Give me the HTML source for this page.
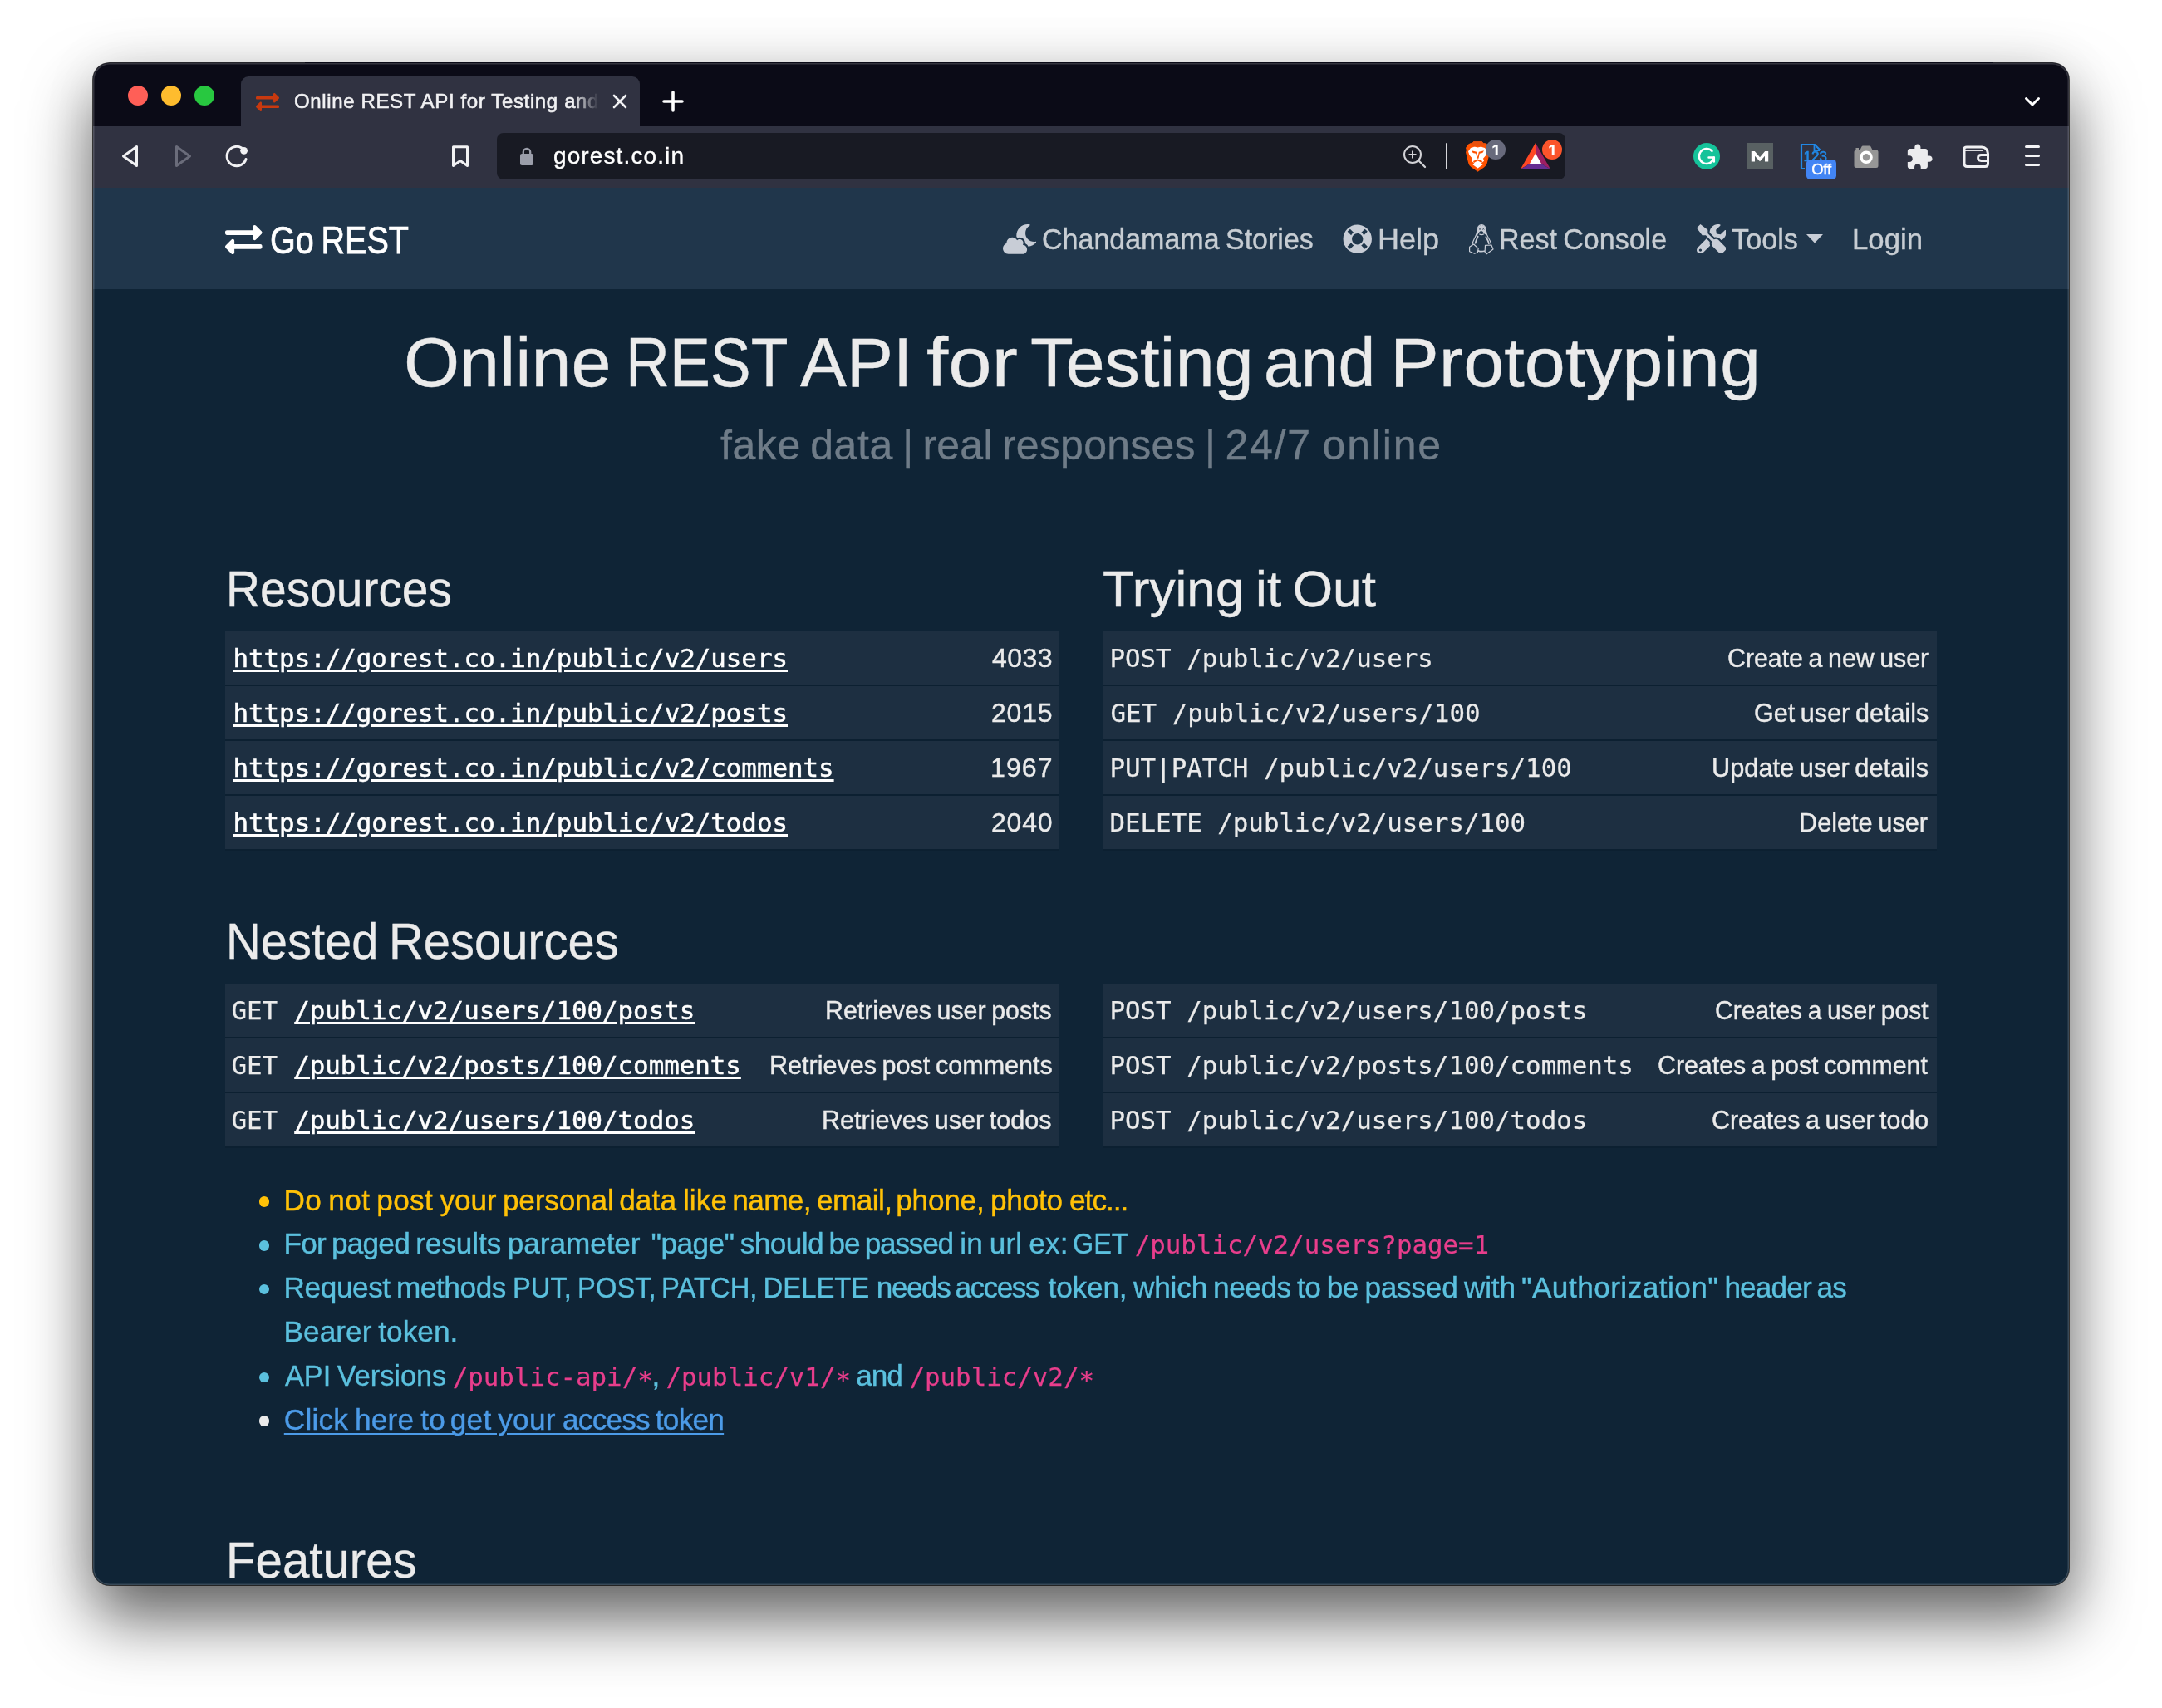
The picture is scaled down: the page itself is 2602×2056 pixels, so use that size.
<!DOCTYPE html>
<html lang="en">
<head>
<meta charset="utf-8">
<title>Online REST API for Testing and Prototyping</title>
<style>
html,body{margin:0;padding:0;}
body{background:#fff;font-family:"Liberation Sans",sans-serif;}
#root{position:relative;width:2602px;height:2056px;overflow:hidden;background:#fff;}
#shadow{position:absolute;left:112px;top:75.5px;width:2378px;height:1832.5px;border-radius:20px;background:#0f2436;
 box-shadow:0 0 0 1px rgba(0,0,0,.7),0 40px 80px rgba(0,0,0,.62),0 0 70px rgba(0,0,0,.07);}
#win{position:absolute;left:0;top:0;width:2602px;height:2056px;will-change:transform;clip-path:inset(75.5px 112px 148px 112px round 20px);}
#win div,#win svg{position:absolute;}
.t{position:absolute;white-space:nowrap;line-height:1;margin:0;padding:0;font-weight:400;font-family:"Liberation Sans",sans-serif;text-decoration:none;-webkit-text-stroke:0.4px currentColor;word-spacing:-0.06em;}
.t.m{-webkit-text-stroke:0.25px currentColor;word-spacing:0;}
.ast{position:relative;top:4.5px;}
.t.ml{-webkit-text-stroke:0.5px currentColor;}
h1.t,h3.t{font-weight:400;}
.w{margin:0;padding:0;font-weight:400;font-size:inherit;}
#tabstrip{left:112px;top:75px;width:2378px;height:77px;background:#0b0b17;}
#toolbar{left:112px;top:151.5px;width:2378px;height:74.5px;background:#303241;}
#tab{left:290px;top:92px;width:480px;height:60px;background:#303241;border-radius:9px 9px 0 0;}
#urlbar{left:598px;top:160px;width:1286px;height:56px;border-radius:8px;background:#181a23;}
#nav{left:112px;top:226px;width:2378px;height:122px;background:#20364b;}
#page{left:112px;top:348px;width:2378px;height:1560px;background:#0f2436;}
.row{background:#1d2f41;height:64px;}
.tl{left:271px;width:1004px;} .tr{left:1327px;width:1004px;}
.bd{background:#0c2031;height:2px;}
.dot{width:12.4px;height:12.4px;border-radius:50%;left:311.8px;}
.tabfade{left:690px;top:100px;width:36px;height:44px;background:linear-gradient(90deg,rgba(48,50,65,0),#303241 85%);}
.badge{border-radius:12px;color:#fff;font-size:15px;line-height:24px;text-align:center;width:24px;height:24px;}
</style>
</head>
<body>
<div id="root">
<div id="shadow"></div>
<div id="win">
<div id="tabstrip"></div>
<div id="toolbar"></div>
<div id="tab"></div>
<div id="urlbar"></div>
<div id="nav"></div>
<div id="page"></div>
<div class="row tl" style="top:760px"></div>
<div class="bd tl" style="top:824px"></div>
<div class="row tl" style="top:826px"></div>
<div class="bd tl" style="top:890px"></div>
<div class="row tl" style="top:892px"></div>
<div class="bd tl" style="top:956px"></div>
<div class="row tl" style="top:958px"></div>
<div class="bd tl" style="top:1022px"></div>
<div class="row tl" style="top:1184px"></div>
<div class="bd tl" style="top:1248px"></div>
<div class="row tl" style="top:1250px"></div>
<div class="bd tl" style="top:1314px"></div>
<div class="row tl" style="top:1316px"></div>
<div class="bd tl" style="top:1380px"></div>
<div class="row tr" style="top:760px"></div>
<div class="bd tr" style="top:824px"></div>
<div class="row tr" style="top:826px"></div>
<div class="bd tr" style="top:890px"></div>
<div class="row tr" style="top:892px"></div>
<div class="bd tr" style="top:956px"></div>
<div class="row tr" style="top:958px"></div>
<div class="bd tr" style="top:1022px"></div>
<div class="row tr" style="top:1184px"></div>
<div class="bd tr" style="top:1248px"></div>
<div class="row tr" style="top:1250px"></div>
<div class="bd tr" style="top:1314px"></div>
<div class="row tr" style="top:1316px"></div>
<div class="bd tr" style="top:1380px"></div>
<div class="dot" style="top:1440.4px;background:#ffc107"></div>
<div class="dot" style="top:1493.2px;background:#5bc0de"></div>
<div class="dot" style="top:1546.0px;background:#5bc0de"></div>
<div class="dot" style="top:1651.6px;background:#5bc0de"></div>
<div class="dot" style="top:1704.4px;background:#ebebeb"></div>
<div style="left:532px;top:1725px;width:14px;height:2px;background:#4c9be8"></div>
<div style="left:666px;top:1725px;width:14px;height:2px;background:#4c9be8"></div>
<span id="t0" class="t tabtitle" style='left:354.0px;top:109.8px;font-size:24px;color:#f1f1f3;letter-spacing:0.638px;-webkit-text-stroke:0.6px #f1f1f3;word-spacing:0;'>Online REST API for Testing and</span>
<span id="t1" class="t" style='left:666.0px;top:174.2px;font-size:28px;color:#ffffff;letter-spacing:1.111px;'>gorest.co.in</span>
<span id="t2" class="t sx" style='left:325.0px;top:265.6px;font-size:46px;color:#ffffff;transform-origin:0 0;transform:scaleX(0.8605);-webkit-text-stroke:0.75px #fff;'>Go REST</span>
<span id="t3" class="t sx" style='left:1254.0px;top:270.6px;font-size:35.6px;color:#c7cdd3;transform-origin:0 0;transform:scaleX(0.9557);'>Chandamama Stories</span>
<span id="t4" class="t sx" style='left:1658.0px;top:270.6px;font-size:35.6px;color:#c7cdd3;transform-origin:0 0;transform:scaleX(1.0126);'>Help</span>
<span id="t5" class="t sx" style='left:1804.4px;top:270.6px;font-size:35.6px;color:#c7cdd3;transform-origin:0 0;transform:scaleX(0.9556);'>Rest Console</span>
<span id="t6" class="t sx" style='left:2084.0px;top:270.6px;font-size:35.6px;color:#c7cdd3;transform-origin:0 0;transform:scaleX(0.9633);'>Tools</span>
<span id="t7" class="t sx" style='left:2229.0px;top:270.6px;font-size:35.6px;color:#c7cdd3;transform-origin:0 0;transform:scaleX(0.9763);'>Login</span>
<h1 class="w"><span id="t8" class="t sx" style='left:486.0px;top:394.4px;font-size:84px;color:#ebebeb;transform-origin:0 0;transform:scaleX(1.0271);'>Online</span>
<span id="t9" class="t sx" style='left:753.4px;top:394.4px;font-size:84px;color:#ebebeb;transform-origin:0 0;transform:scaleX(0.8722);'>REST</span>
<span id="t10" class="t sx" style='left:963.4px;top:394.4px;font-size:84px;color:#ebebeb;transform-origin:0 0;transform:scaleX(0.9984);'>API</span>
<span id="t11" class="t sx" style='left:1114.6px;top:394.4px;font-size:84px;color:#ebebeb;transform-origin:0 0;transform:scaleX(1.1204);'>for</span>
<span id="t12" class="t sx" style='left:1240.0px;top:394.4px;font-size:84px;color:#ebebeb;transform-origin:0 0;transform:scaleX(1.0098);'>Testing</span>
<span id="t13" class="t sx" style='left:1520.6px;top:394.4px;font-size:84px;color:#ebebeb;transform-origin:0 0;transform:scaleX(0.9590);'>and</span>
<span id="t14" class="t sx" style='left:1673.0px;top:394.4px;font-size:84px;color:#ebebeb;transform-origin:0 0;transform:scaleX(1.0494);'>Prototyping</span></h1>
<p class="w"><span id="t15" class="t" style='left:867.0px;top:510.7px;font-size:50px;color:#6f7c88;letter-spacing:0.567px;'>fake data |</span>
<span id="t16" class="t" style='left:1110.4px;top:510.7px;font-size:50px;color:#6f7c88;letter-spacing:0.251px;'>real responses |</span>
<span id="t17" class="t" style='left:1474.4px;top:510.7px;font-size:50px;color:#6f7c88;letter-spacing:1.804px;'>24/7 online</span></p>
<h3 id="t18" class="t sx" style='left:272.4px;top:678.2px;font-size:62px;color:#ebebeb;transform-origin:0 0;transform:scaleX(0.9175);'>Resources</h3>
<h3 id="t19" class="t sx" style='left:1327.0px;top:678.2px;font-size:62px;color:#ebebeb;transform-origin:0 0;transform:scaleX(1.0033);'>Trying it Out</h3>
<h3 id="t20" class="t sx" style='left:272.0px;top:1102.1px;font-size:62px;color:#ebebeb;transform-origin:0 0;transform:scaleX(0.9336);'>Nested Resources</h3>
<h3 id="t21" class="t sx" style='left:272.2px;top:1846.5px;font-size:62px;color:#ebebeb;transform-origin:0 0;transform:scaleX(0.9389);'>Features</h3>
<a id="t22" class="t m ml" style='left:280.5px;top:776.9px;font-size:30.8px;color:#ffffff;font-family:"DejaVu Sans Mono", "Liberation Mono", monospace;text-decoration:underline;text-decoration-thickness:2.6px;text-underline-offset:2.6px;'>https://gorest.co.in/public/v2/users</a>
<span id="t23" class="t" style='left:1194.0px;top:775.9px;font-size:32px;color:#ebebeb;letter-spacing:0.453px;'>4033</span>
<a id="t24" class="t m ml" style='left:280.5px;top:842.9px;font-size:30.8px;color:#ffffff;font-family:"DejaVu Sans Mono", "Liberation Mono", monospace;text-decoration:underline;text-decoration-thickness:2.6px;text-underline-offset:2.6px;'>https://gorest.co.in/public/v2/posts</a>
<span id="t25" class="t" style='left:1193.0px;top:841.9px;font-size:32px;color:#ebebeb;letter-spacing:0.786px;'>2015</span>
<a id="t26" class="t m ml" style='left:280.5px;top:908.9px;font-size:30.8px;color:#ffffff;font-family:"DejaVu Sans Mono", "Liberation Mono", monospace;text-decoration:underline;text-decoration-thickness:2.6px;text-underline-offset:2.6px;'>https://gorest.co.in/public/v2/comments</a>
<span id="t27" class="t" style='left:1192.0px;top:907.9px;font-size:32px;color:#ebebeb;letter-spacing:1.120px;'>1967</span>
<a id="t28" class="t m ml" style='left:280.5px;top:974.9px;font-size:30.8px;color:#ffffff;font-family:"DejaVu Sans Mono", "Liberation Mono", monospace;text-decoration:underline;text-decoration-thickness:2.6px;text-underline-offset:2.6px;'>https://gorest.co.in/public/v2/todos</a>
<span id="t29" class="t" style='left:1193.0px;top:973.9px;font-size:32px;color:#ebebeb;letter-spacing:0.786px;'>2040</span>
<code id="t30" class="t m" style='left:1335.5px;top:776.9px;font-size:30.8px;color:#ebebeb;font-family:"DejaVu Sans Mono", "Liberation Mono", monospace;'>POST /public/v2/users</code>
<span id="t31" class="t sx" style='left:2079.0px;top:775.9px;font-size:32px;color:#ebebeb;transform-origin:0 0;transform:scaleX(0.9472);'>Create a new user</span>
<code id="t32" class="t m" style='left:1336.5px;top:842.9px;font-size:30.8px;color:#ebebeb;font-family:"DejaVu Sans Mono", "Liberation Mono", monospace;'>GET /public/v2/users/100</code>
<span id="t33" class="t sx" style='left:2111.0px;top:841.9px;font-size:32px;color:#ebebeb;transform-origin:0 0;transform:scaleX(0.9543);'>Get user details</span>
<code id="t34" class="t m" style='left:1335.5px;top:908.9px;font-size:30.8px;color:#ebebeb;font-family:"DejaVu Sans Mono", "Liberation Mono", monospace;'>PUT|PATCH /public/v2/users/100</code>
<span id="t35" class="t sx" style='left:2060.0px;top:907.9px;font-size:32px;color:#ebebeb;transform-origin:0 0;transform:scaleX(0.9608);'>Update user details</span>
<code id="t36" class="t m" style='left:1335.5px;top:974.9px;font-size:30.8px;color:#ebebeb;font-family:"DejaVu Sans Mono", "Liberation Mono", monospace;'>DELETE /public/v2/users/100</code>
<span id="t37" class="t sx" style='left:2165.2px;top:973.9px;font-size:32px;color:#ebebeb;transform-origin:0 0;transform:scaleX(0.9585);'>Delete user</span>
<code id="t38" class="t m" style='left:278.5px;top:1200.9px;font-size:30.8px;color:#ebebeb;font-family:"DejaVu Sans Mono", "Liberation Mono", monospace;'>GET</code>
<a id="t39" class="t m ml" style='left:354.2px;top:1200.9px;font-size:30.8px;color:#ffffff;font-family:"DejaVu Sans Mono", "Liberation Mono", monospace;text-decoration:underline;text-decoration-thickness:2.6px;text-underline-offset:2.6px;'>/public/v2/users/100/posts</a>
<span id="t40" class="t sx" style='left:993.0px;top:1199.9px;font-size:32px;color:#ebebeb;transform-origin:0 0;transform:scaleX(0.9471);'>Retrieves user posts</span>
<code id="t41" class="t m" style='left:278.5px;top:1266.9px;font-size:30.8px;color:#ebebeb;font-family:"DejaVu Sans Mono", "Liberation Mono", monospace;'>GET</code>
<a id="t42" class="t m ml" style='left:354.2px;top:1266.9px;font-size:30.8px;color:#ffffff;font-family:"DejaVu Sans Mono", "Liberation Mono", monospace;text-decoration:underline;text-decoration-thickness:2.6px;text-underline-offset:2.6px;'>/public/v2/posts/100/comments</a>
<span id="t43" class="t sx" style='left:925.8px;top:1265.9px;font-size:32px;color:#ebebeb;transform-origin:0 0;transform:scaleX(0.9542);'>Retrieves post comments</span>
<code id="t44" class="t m" style='left:278.5px;top:1332.9px;font-size:30.8px;color:#ebebeb;font-family:"DejaVu Sans Mono", "Liberation Mono", monospace;'>GET</code>
<a id="t45" class="t m ml" style='left:354.2px;top:1332.9px;font-size:30.8px;color:#ffffff;font-family:"DejaVu Sans Mono", "Liberation Mono", monospace;text-decoration:underline;text-decoration-thickness:2.6px;text-underline-offset:2.6px;'>/public/v2/users/100/todos</a>
<span id="t46" class="t sx" style='left:989.0px;top:1331.9px;font-size:32px;color:#ebebeb;transform-origin:0 0;transform:scaleX(0.9550);'>Retrieves user todos</span>
<code id="t47" class="t m" style='left:1335.5px;top:1200.9px;font-size:30.8px;color:#ebebeb;font-family:"DejaVu Sans Mono", "Liberation Mono", monospace;'>POST /public/v2/users/100/posts</code>
<span id="t48" class="t sx" style='left:2063.6px;top:1199.9px;font-size:32px;color:#ebebeb;transform-origin:0 0;transform:scaleX(0.9382);'>Creates a user post</span>
<code id="t49" class="t m" style='left:1335.5px;top:1266.9px;font-size:30.8px;color:#ebebeb;font-family:"DejaVu Sans Mono", "Liberation Mono", monospace;'>POST /public/v2/posts/100/comments</code>
<span id="t50" class="t sx" style='left:1995.4px;top:1265.9px;font-size:32px;color:#ebebeb;transform-origin:0 0;transform:scaleX(0.9474);'>Creates a post comment</span>
<code id="t51" class="t m" style='left:1335.5px;top:1332.9px;font-size:30.8px;color:#ebebeb;font-family:"DejaVu Sans Mono", "Liberation Mono", monospace;'>POST /public/v2/users/100/todos</code>
<span id="t52" class="t sx" style='left:2060.0px;top:1331.9px;font-size:32px;color:#ebebeb;transform-origin:0 0;transform:scaleX(0.9488);'>Creates a user todo</span>
<span id="t53" class="t" style='left:341.6px;top:1426.6px;font-size:35.2px;color:#ffc107;letter-spacing:0.350px;'>Do not post</span>
<span id="t54" class="t" style='left:529.6px;top:1426.6px;font-size:35.2px;color:#ffc107;letter-spacing:-0.166px;'>your personal</span>
<span id="t55" class="t" style='left:745.2px;top:1426.6px;font-size:35.2px;color:#ffc107;letter-spacing:0.116px;'>data like</span>
<span id="t56" class="t" style='left:881.2px;top:1426.6px;font-size:35.2px;color:#ffc107;letter-spacing:-0.596px;'>name, email,</span>
<span id="t57" class="t" style='left:1078.2px;top:1426.6px;font-size:35.2px;color:#ffc107;letter-spacing:-0.216px;'>phone, photo</span>
<span id="t58" class="t" style='left:1287.0px;top:1426.6px;font-size:35.2px;color:#ffc107;letter-spacing:-0.980px;'>etc...</span>
<span id="t59" class="t" style='left:341.6px;top:1479.4px;font-size:35.2px;color:#5bc0de;letter-spacing:-0.769px;'>For paged</span>
<span id="t60" class="t" style='left:500.2px;top:1479.4px;font-size:35.2px;color:#5bc0de;letter-spacing:-0.081px;'>results parameter</span>
<span id="t61" class="t" style='left:783.6px;top:1479.4px;font-size:35.2px;color:#5bc0de;letter-spacing:-0.556px;'>"page" should</span>
<span id="t62" class="t" style='left:997.6px;top:1479.4px;font-size:35.2px;color:#5bc0de;letter-spacing:-1.226px;'>be passed</span>
<span id="t63" class="t" style='left:1155.2px;top:1479.4px;font-size:35.2px;color:#5bc0de;letter-spacing:0.168px;'>in url ex:</span>
<span id="t64" class="t sx" style='left:1291.0px;top:1479.4px;font-size:35.2px;color:#5bc0de;transform-origin:0 0;transform:scaleX(0.9210);'>GET</span>
<code id="t65" class="t m" style='left:1365.7px;top:1483.1px;font-size:30.8px;color:#e83e8c;font-family:"DejaVu Sans Mono", "Liberation Mono", monospace;'>/public/v2/users?page=1</code>
<span id="t66" class="t" style='left:341.6px;top:1532.2px;font-size:35.2px;color:#5bc0de;letter-spacing:-0.421px;'>Request methods</span>
<span id="t67" class="t sx" style='left:617.0px;top:1532.2px;font-size:35.2px;color:#5bc0de;transform-origin:0 0;transform:scaleX(0.9306);'>PUT, POST,</span>
<span id="t68" class="t sx" style='left:796.2px;top:1532.2px;font-size:35.2px;color:#5bc0de;transform-origin:0 0;transform:scaleX(0.9325);'>PATCH, DELETE</span>
<span id="t69" class="t" style='left:1054.8px;top:1532.2px;font-size:35.2px;color:#5bc0de;letter-spacing:-1.486px;'>needs access</span>
<span id="t70" class="t" style='left:1261.6px;top:1532.2px;font-size:35.2px;color:#5bc0de;letter-spacing:-0.164px;'>token, which</span>
<span id="t71" class="t" style='left:1460.0px;top:1532.2px;font-size:35.2px;color:#5bc0de;letter-spacing:-0.425px;'>needs to be</span>
<span id="t72" class="t" style='left:1642.4px;top:1532.2px;font-size:35.2px;color:#5bc0de;letter-spacing:-0.215px;'>passed with</span>
<span id="t73" class="t" style='left:1831.0px;top:1532.2px;font-size:35.2px;color:#5bc0de;letter-spacing:0.456px;'>"Authorization"</span>
<span id="t74" class="t" style='left:2075.4px;top:1532.2px;font-size:35.2px;color:#5bc0de;letter-spacing:-0.865px;'>header as</span>
<span id="t75" class="t" style='left:341.6px;top:1585.0px;font-size:35.2px;color:#5bc0de;letter-spacing:0.051px;'>Bearer token.</span>
<span id="t76" class="t sx" style='left:342.8px;top:1637.8px;font-size:35.2px;color:#5bc0de;transform-origin:0 0;transform:scaleX(0.9742);'>API Versions</span>
<code id="t77" class="t m" style='left:544.7px;top:1641.5px;font-size:30.8px;color:#e83e8c;font-family:"DejaVu Sans Mono", "Liberation Mono", monospace;'>/public-api/<span class="ast">*</span></code>
<span id="t78" class="t nofit" style='left:784.5px;top:1637.8px;font-size:35.2px;color:#5bc0de;'>,</span>
<code id="t79" class="t m" style='left:801.5px;top:1641.5px;font-size:30.8px;color:#e83e8c;font-family:"DejaVu Sans Mono", "Liberation Mono", monospace;'>/public/v1/<span class="ast">*</span></code>
<span id="t80" class="t" style='left:1030.2px;top:1637.8px;font-size:35.2px;color:#5bc0de;letter-spacing:-1.040px;'>and</span>
<code id="t81" class="t m" style='left:1094.5px;top:1641.5px;font-size:30.8px;color:#e83e8c;font-family:"DejaVu Sans Mono", "Liberation Mono", monospace;'>/public/v2/<span class="ast">*</span></code>
<a id="t82" class="t" style='left:341.8px;top:1690.6px;font-size:35.2px;color:#4c9be8;letter-spacing:0.217px;text-decoration:underline;text-decoration-thickness:2px;text-underline-offset:4px;'>Click here to</a>
<a id="t83" class="t" style='left:541.8px;top:1690.6px;font-size:35.2px;color:#4c9be8;letter-spacing:0.226px;text-decoration:underline;text-decoration-thickness:2px;text-underline-offset:4px;'>get your</a>
<a id="t84" class="t" style='left:677.0px;top:1690.6px;font-size:35.2px;color:#4c9be8;letter-spacing:-0.761px;text-decoration:underline;text-decoration-thickness:2px;text-underline-offset:4px;'>access token</a>
<div class="tabfade"></div>
<!-- traffic lights -->
<div style="left:154px;top:103px;width:24px;height:24px;border-radius:50%;background:#ff5f57"></div>
<div style="left:194px;top:103px;width:24px;height:24px;border-radius:50%;background:#febc2e"></div>
<div style="left:234px;top:103px;width:24px;height:24px;border-radius:50%;background:#28c840"></div>
<!-- favicon -->
<svg style="left:308px;top:112px" width="28" height="22" viewBox="0 0 512 400"><path fill="#c8390f" d="M0 112V96c0-13.300 10.700-24 24-24h360V24c0-21.400 25.900-32 41-17l80 80c9.400 9.400 9.400 24.600 0 34l-80 80c-15 15-41 4.500-41-17v-48H24c-13.300 0-24-10.700-24-24zm488 152H128v-48c0-21.300-25.900-32.100-41-17l-80 80c-9.400 9.400-9.400 24.600 0 34l80 80c15 15 41 4.400 41-17v-48h360c13.300 0 24-10.700 24-24v-16c0-13.300-10.700-24-24-24z"/></svg>
<!-- tab close, new tab, chevron -->
<svg style="left:736px;top:112px" width="20" height="20" viewBox="0 0 20 20"><path d="M3 3 L17 17 M17 3 L3 17" stroke="#f2f2f4" stroke-width="2.6" stroke-linecap="round" fill="none"/></svg>
<svg style="left:796px;top:108px" width="28" height="28" viewBox="0 0 28 28"><path d="M14 3 V25 M3 14 H25" stroke="#ffffff" stroke-width="3.6" stroke-linecap="round" fill="none"/></svg>
<svg style="left:2434px;top:113px" width="24" height="18" viewBox="0 0 24 18"><path d="M4.500 5.500 L12 13 L19.500 5.500" stroke="#ffffff" stroke-width="3" stroke-linecap="round" stroke-linejoin="round" fill="none"/></svg>
<!-- back / forward / reload -->
<svg style="left:140px;top:170px" width="34" height="36" viewBox="0 0 34 36"><path d="M24.500 6.500 V29.500 L8.500 18 Z" stroke="#f2f2f4" stroke-width="3" stroke-linejoin="round" fill="none"/></svg>
<svg style="left:204px;top:170px" width="34" height="36" viewBox="0 0 34 36"><path d="M8.500 6.500 V29.500 L24.500 18 Z" stroke="#6a6c7a" stroke-width="3" stroke-linejoin="round" fill="none"/></svg>
<svg style="left:266px;top:170px" width="38" height="36" viewBox="0 0 38 36"><path d="M24.800 8 A11.700 11.700 0 1 0 30 21.500" stroke="#f2f2f4" stroke-width="3" stroke-linecap="round" fill="none"/><circle cx="27.600" cy="11.300" r="4.400" fill="#f2f2f4"/></svg>
<!-- bookmark -->
<svg style="left:540px;top:172px" width="28" height="32" viewBox="0 0 28 32"><path d="M5.500 4.800 H22.500 V27.500 L14 21.500 L5.500 27.500 Z" stroke="#f2f2f4" stroke-width="3" stroke-linejoin="round" fill="none"/></svg>
<!-- lock -->
<svg style="left:624px;top:176px" width="20" height="24" viewBox="0 0 20 24"><rect x="2" y="9" width="16" height="14" rx="2.200" fill="#9b9eaa"/><path d="M5.800 10 V7 A4.200 4.200 0 0 1 14.200 7 V10" stroke="#9b9eaa" stroke-width="2.300" fill="none"/></svg>
<!-- zoom indicator -->
<svg style="left:1686px;top:172px" width="32" height="32" viewBox="0 0 32 32"><circle cx="14" cy="14" r="10" stroke="#d2d2d6" stroke-width="2" fill="none"/><path d="M9.500 14 H18.500 M14 9.500 V18.500" stroke="#d2d2d6" stroke-width="2" fill="none"/><path d="M21.300 21.300 L29 29" stroke="#d2d2d6" stroke-width="2.300" stroke-linecap="round"/></svg>
<div style="left:1740px;top:172px;width:2.400px;height:32px;background:#d6d6da;border-radius:1px"></div>
<!-- brave lion -->
<svg style="left:1763px;top:169.500px" width="31" height="37.500" viewBox="0 0 31 38" preserveAspectRatio="none">
<path fill="#ff5200" d="M22.500 2.500 L20.500 0.300 H10.500 L8.500 2.500 C6.500 2 4.500 3 3 5 L1 8.200 L1.800 11 L1 13.500 L4.200 26.500 C4.800 28.800 6 30.300 8 31.800 L15.500 37.300 L23 31.800 C25 30.300 26.200 28.800 26.800 26.500 L30 13.500 L29.200 11 L30 8.200 L28 5 C26.500 3 24.500 2 22.500 2.500 Z"/>
<path fill="#fff" d="M15.500 7.500 C17 7.500 19 6.800 20.500 7 L24 8 L27 12.500 L25.500 17 L22 21 L23 24 L20.500 26 L19 25.500 L21.500 28.500 L15.500 33 L9.500 28.500 L12 25.500 L10.500 26 L8 24 L9 21 L5.500 17 L4 12.500 L7 8 L10.500 7 C12 6.800 14 7.500 15.500 7.500 Z"/>
<path fill="#ff5200" d="M8 11.300 L14.200 12.800 L15.500 19 L16.800 12.800 L23 11.300 L21.300 14.200 L17.700 15 L16.500 21 H14.500 L13.300 15 L9.700 14.200 Z M9.800 24.400 L15.500 21.800 L21.200 24.400 L20 26 L15.500 23.800 L11 26 Z"/>
<path fill="#e8500c" d="M10.500 .3 H20.500 L22.500 2.500 L25 2.300 L21.500 5.800 H9.500 L6 2.300 L8.500 2.500 Z"/>
</svg>
<div class="badge" style="left:1788px;top:168px;background:#686a7c"></div>
<div style="left:1795px;top:168px;width:14px;height:18.35px;overflow:hidden"><span style="position:absolute;left:0;top:3.05px;font:bold 20.5px/1 'Liberation Sans',sans-serif;color:#fff">1</span></div>
<!-- BAT -->
<svg style="left:1830px;top:172px" width="36" height="32" viewBox="0 0 36 32">
<path d="M18 0 L0 31.500 L18 21 Z" fill="#ff4724"/><path d="M18 0 L36 31.500 L18 21 Z" fill="#9e1f63"/><path d="M0 31.500 H36 L18 21 Z" fill="#662d91"/>
<path d="M18 12.500 L11 25 H25 Z" fill="#fff"/></svg>
<div class="badge" style="left:1856px;top:168px;background:#fb542b"></div>
<div style="left:1862.9px;top:168px;width:14px;height:18.35px;overflow:hidden"><span style="position:absolute;left:0;top:3.05px;font:bold 20.5px/1 'Liberation Sans',sans-serif;color:#fff">1</span></div>
<!-- grammarly -->
<svg style="left:2038px;top:172px" width="32" height="32" viewBox="0 0 32 32"><circle cx="16" cy="16" r="16" fill="#15c39a"/><path d="M22.500 9.800 A9 9 0 1 0 24.800 17.500 H18.500" stroke="#fff" stroke-width="2.500" stroke-linecap="round" stroke-linejoin="round" fill="none"/><path d="M24.800 17.500 V22.500" stroke="#fff" stroke-width="2.500" stroke-linecap="round"/></svg>
<!-- M -->
<div style="left:2102px;top:172px;width:32px;height:32px;background:#586062"></div>
<svg style="left:2102px;top:172px" width="32" height="32" viewBox="0 0 32 32"><path d="M5.800 22.500 V10 H9.800 L16 17.300 L22.200 10 H26.200 V22.500 H22 V15.800 L16 22.300 L10 15.800 V22.500 Z" fill="#fff"/></svg>
<!-- 123 doc -->
<svg style="left:2166px;top:172px" width="34" height="34" viewBox="0 0 34 34"><path d="M6 31 H2 V2 H18 L24.500 8.500" stroke="#2188e5" stroke-width="2.200" fill="none"/><path d="M17.500 2.500 V9 H24" stroke="#2188e5" stroke-width="1.800" fill="none"/><text x="4.500" y="22" font-family="Liberation Sans, sans-serif" font-size="17" fill="#2188e5" stroke="#2188e5" stroke-width=".6">123</text></svg>
<div style="left:2174px;top:192px;width:36px;height:24px;border-radius:4.500px;background:#4285f4;color:#fff;font-size:18.500px;line-height:24px;text-align:center;letter-spacing:-.3px;-webkit-text-stroke:.4px #fff">Off</div>
<!-- camera -->
<svg style="left:2231px;top:175px" width="30" height="28" viewBox="0 0 30 28"><path d="M3 5.500 H7.500 L9.500 1.500 Q10 .5 11 .5 H19 Q20 .5 20.500 1.500 L22.500 5.500 H27 Q29.500 5.500 29.500 8 V24.500 Q29.500 27 27 27 H3 Q.5 27 .5 24.500 V8 Q.5 5.500 3 5.500 Z" fill="#969696"/><circle cx="15" cy="14.300" r="6" stroke="#fff" stroke-width="3.600" fill="none"/><rect x="2.500" y="3" width="3.500" height="3" fill="#969696"/></svg>
<!-- puzzle -->
<svg style="left:2292.500px;top:171.500px" width="34" height="34" viewBox="0 0 24 24"><path fill="#ececee" d="M20.500 11H19V7c0-1.100-.9-2-2-2h-4V3.500C13 2.120 11.880 1 10.500 1S8 2.120 8 3.500V5H4c-1.100 0-1.990.9-1.990 2v3.800H3.500c1.490 0 2.700 1.210 2.700 2.700s-1.210 2.700-2.700 2.700H2V20c0 1.100.9 2 2 2h3.800v-1.500c0-1.490 1.210-2.700 2.700-2.700 1.490 0 2.700 1.210 2.700 2.700V22H17c1.100 0 2-.9 2-2v-4h1.500c1.380 0 2.500-1.120 2.500-2.500S21.880 11 20.500 11z"/></svg>
<!-- wallet -->
<svg style="left:2361px;top:174px" width="35" height="30" viewBox="0 0 35 30"><path d="M3 5 Q3 3 6 3 H24 Q31 3.500 31.500 11 V23 Q31.500 26.500 28 26.500 H6.500 Q3 26.500 3 23 Z" stroke="#f0f0f2" stroke-width="3" fill="none" stroke-linejoin="round"/><path d="M3.500 7 H25" stroke="#f0f0f2" stroke-width="1.800"/><path d="M31.500 12.500 H23.500 Q19.500 12.500 19.500 16 Q19.500 19.500 23.500 19.500 H31.500" stroke="#f0f0f2" stroke-width="2.800" fill="none"/></svg>
<!-- hamburger -->
<div style="left:2437px;top:175px;width:18px;height:3.400px;border-radius:2px;background:#f4f4f6"></div>
<div style="left:2437px;top:186px;width:18px;height:3.400px;border-radius:2px;background:#f4f4f6"></div>
<div style="left:2437px;top:197px;width:18px;height:3.400px;border-radius:2px;background:#f4f4f6"></div>
<!-- site nav icons -->
<svg style="left:271px;top:271px" width="44.500" height="35" viewBox="0 0 512 400" preserveAspectRatio="none"><path fill="#fff" d="M0 112V96c0-13.300 10.700-24 24-24h360V24c0-21.400 25.900-32 41-17l80 80c9.400 9.400 9.400 24.600 0 34l-80 80c-15 15-41 4.500-41-17v-48H24c-13.300 0-24-10.700-24-24zm488 152H128v-48c0-21.300-25.900-32.100-41-17l-80 80c-9.400 9.400-9.400 24.600 0 34l80 80c15 15 41 4.400 41-17v-48h360c13.300 0 24-10.700 24-24v-16c0-13.300-10.700-24-24-24z"/></svg>
<svg style="left:1207px;top:269.800px" width="40.300" height="35.800" viewBox="0 0 576 512" preserveAspectRatio="none"><path fill="#c8cdd6" d="M342.800 352.700c5.700-9.600 9.200-20.700 9.200-32.700 0-35.300-28.700-64-64-64-17.200 0-32.800 6.900-44.300 17.900-16.300-29.600-47.500-49.900-83.700-49.900-53 0-96 43-96 96 0 2 .5 3.800 .6 5.700C27.100 338.800 0 374.100 0 416c0 53 43 96 96 96h240c44.200 0 80-35.800 80-80 0-41.900-32.300-75.800-73.200-79.300zm222.500-54.300c-93.100 17.700-178.500-53.700-178.500-147.700 0-54.200 29-104 76.100-130.800 7.300-4.100 5.400-15.100-2.800-16.700C448.400 1.100 436.700 0 425 0 319.100 0 233.100 85.900 233.100 192c0 8.500 .7 16.800 1.800 25 5.900 4.300 11.600 8.900 16.700 14.200 11.400-4.700 23.700-7.200 36.400-7.200 52.900 0 96 43.100 96 96 0 3.600-.2 7.200-.6 10.700 23.600 10.800 42.400 29.500 53.500 52.600 54.400-3.400 103.700-29.300 137.100-70.400 5.300-6.500-.5-16.100-8.700-14.500z"/></svg>
<svg style="left:1616px;top:270px" width="35.500" height="35.500" viewBox="0 0 512 512"><path fill="#c8cdd6" d="M256 8C119.033 8 8 119.033 8 256s111.033 248 248 248 248-111.033 248-248S392.967 8 256 8zm173.696 119.559l-63.399 63.399c-10.987-18.559-26.670-34.252-45.255-45.255l63.399-63.399a218.396 218.396 0 0 1 45.255 45.255zM256 352c-53.019 0-96-42.981-96-96s42.981-96 96-96 96 42.981 96 96-42.981 96-96 96zM127.559 82.304l63.399 63.399c-18.559 10.987-34.252 26.670-45.255 45.255l-63.399-63.399a218.372 218.372 0 0 1 45.255-45.255zM82.304 384.441l63.399-63.399c10.987 18.559 26.670 34.252 45.255 45.255l-63.399 63.399a218.396 218.396 0 0 1-45.255-45.255zm302.137 45.255l-63.399-63.399c18.559-10.987 34.252-26.670 45.255-45.255l63.399 63.399a218.403 218.403 0 0 1-45.255 45.255z"/></svg>
<!-- linux penguin -->
<svg style="left:1767px;top:269px" width="32" height="38" viewBox="-1 -1 32 38"><g stroke="#c8cdd6" fill="none" stroke-width="1.200" stroke-linejoin="round">
<path d="M9.800 8 C9.800 -2 20.400 -2 20.400 8 C20.600 12 22 14 24 17.500 C26 21 26.800 23 26.500 25.500" />
<path d="M9.800 8 C9.600 12 8 14 6.500 17 C4.800 20.300 4 22.500 4 24.500" />
<path d="M.6 27.300 L5.600 24 L11.200 29.100 L10.300 33.800 L6.600 35.200 L.6 32.800 Z"/>
<path d="M19.500 25.400 L26.900 25 L29 30.100 L21.100 35.800 L19.100 33.300 Z"/>
<path d="M10.800 31.800 Q15 33.500 19 32" stroke-width="1.800"/>
<path d="M11 14 C9 18 8 20 7.500 23.500 M20 14.500 C22 18 23.500 20.500 24 23.800" stroke-width="1.700"/>
</g>
<path fill="#c8cdd6" d="M10 8 C10 -1.500 20.200 -1.500 20.200 8 C20.300 10 20.600 11.500 21.400 13 L19 12 C17.500 11 17 9 16 8.500 C15 8.200 14 8.200 13 8.800 C12 9.500 11.500 11 10.500 12.500 L9 13 C9.700 11.500 10 10 10 8 Z"/>
<path d="M12 6.300 q1 -1.500 2 0 M16.300 6.300 q1 -1.500 2 0" stroke="#20364b" stroke-width="1" fill="none"/>
<path d="M12.300 11.800 Q15 13.500 18 11.800" stroke="#c8cdd6" stroke-width="1.300" fill="none"/>
</svg>
<svg style="left:2041.500px;top:269.800px" width="35.500" height="35.500" viewBox="0 0 512 512"><path fill="#c8cdd6" d="M501.100 395.700L384 278.600c-23.100-23.100-57.600-27.600-85.400-13.900L192 158.100V96L64 0 0 64l96 128h62.100l106.600 106.600c-13.600 27.800-9.200 62.300 13.900 85.400l117.100 117.100c14.600 14.600 38.200 14.600 52.700 0l52.700-52.700c14.500-14.600 14.500-38.200 0-52.700zM331.700 225c28.300 0 54.900 11 74.900 31l19.400 19.400c15.800-6.900 30.800-16.500 43.800-29.500 37.100-37.100 49.700-89.300 37.900-136.700-2.200-9-13.500-12.100-20.100-5.500l-74.400 74.400-67.900-11.300L334 98.900l74.400-74.400c6.600-6.600 3.400-17.900-5.700-20.200-47.400-11.700-99.600 .9-136.600 37.900-28.500 28.500-41.900 66.100-41.200 103.600l82.100 82.100c8.100-1.900 16.500-2.900 24.700-2.900zm-103.900 82l-56.700-56.700L18.700 402.800c-25 25-25 65.500 0 90.500s65.500 25 90.500 0l123.600-123.600c-7.600-19.900-9.900-41.600-5-62.700zM64 472c-13.200 0-24-10.800-24-24 0-13.300 10.700-24 24-24s24 10.700 24 24c0 13.200-10.700 24-24 24z"/></svg>
<svg style="left:2174px;top:282px" width="20" height="11" viewBox="0 0 20 11"><path d="M0 0 H20 L10 10.500 Z" fill="#c8cdd6"/></svg>

<div style="left:112px;top:75.5px;width:2378px;height:1832.5px;border-radius:20px;box-shadow:inset 0 0 0 1.5px rgba(255,255,255,.17)"></div>
</div>
</div>
</body>
</html>
